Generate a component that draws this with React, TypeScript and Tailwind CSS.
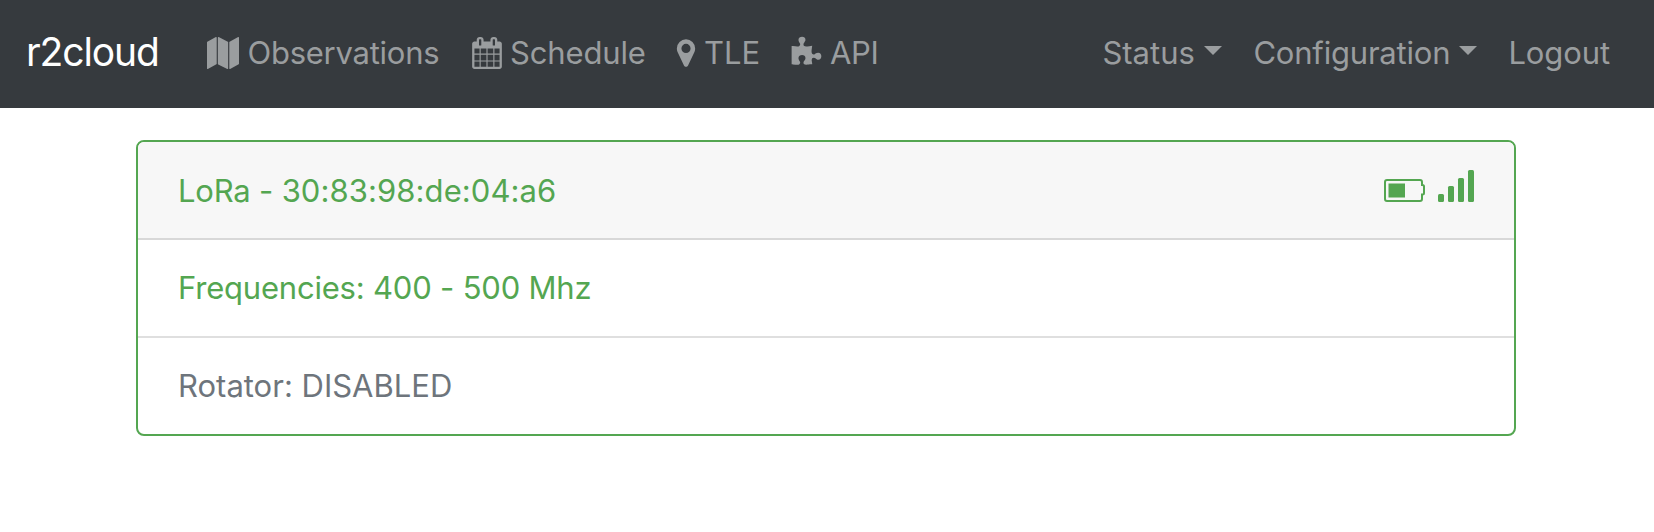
import React from "react";

type IconProps = { d: string; className?: string };

function Glyph({ d, className = "" }: IconProps) {
  return (
    <svg viewBox="0 0 1792 1792" fill="currentColor" className={`h-8 w-8 shrink-0 overflow-visible ${className}`} aria-hidden="true">
      <path d={d} />
    </svg>
  );
}

const MAP =
  "M512 0q13 0 22.5 9.5t9.5 22.5v1472q0 20-17 28l-480 256q-7 4-15 4-13 0-22.5-9.5t-9.5-22.5v-1472q0-20 17-28l480-256q7-4 15-4zm1248 0q13 0 22.5 9.5t9.5 22.5v1472q0 20-17 28l-480 256q-7 4-15 4-13 0-22.5-9.5t-9.5-22.5v-1472q0-20 17-28l480-256q7-4 15-4zm-1120 0q8 0 14 3l512 256q18 10 18 29v1472q0 13-9.5 22.5t-22.5 9.5q-8 0-14-3l-512-256q-18-10-18-29v-1472q0-13 9.5-22.5t22.5-9.5z";
const CALENDAR =
  "M192 1664h288v-288h-288v288zm352 0h320v-288h-320v288zm-352-352h288v-320h-288v320zm352 0h320v-320h-320v320zm-352-384h288v-288h-288v288zm736 736h320v-288h-320v288zm-384-736h320v-288h-320v288zm768 736h288v-288h-288v288zm-384-352h320v-320h-320v320zm-352-864v-288q0-13-9.5-22.5t-22.5-9.5h-64q-13 0-22.5 9.5t-9.5 22.5v288q0 13 9.5 22.5t22.5 9.5h64q13 0 22.5-9.5t9.5-22.5zm736 864h288v-320h-288v320zm-384-384h320v-288h-320v288zm384 0h288v-288h-288v288zm32-480v-288q0-13-9.5-22.5t-22.5-9.5h-64q-13 0-22.5 9.5t-9.5 22.5v288q0 13 9.5 22.5t22.5 9.5h64q13 0 22.5-9.5t9.5-22.5zm384-64v1280q0 52-38 90t-90 38h-1408q-52 0-90-38t-38-90v-1280q0-52 38-90t90-38h128v-96q0-66 47-113t113-47h64q66 0 113 47t47 113v96h384v-96q0-66 47-113t113-47h64q66 0 113 47t47 113v96h128q52 0 90 38t38 90z";
const MARKER =
  "M1152 640q0-106-75-181t-181-75-181 75-75 181 75 181 181 75 181-75 75-181zm256 0q0 109-33 179l-364 774q-16 33-47.5 52t-67.5 19-67.5-19-46.5-52l-365-774q-33-70-33-179 0-212 150-362t362-150 362 150 150 362z";
const PUZZLE =
  "M1755 1083q0 81-44.5 135t-123.5 54q-41 0-77.5-17.5t-59-38-56.5-38-71-17.5q-110 0-110 124 0 39 16 115t15 115v5q-22 0-33 1-34 3-97.5 11.5t-115.5 13.5-98 5q-61 0-103-26.5t-42-83.5q0-37 17.5-71t38-56.5 38-59 17.5-77.5q0-79-54-123.5t-135-44.5q-84 0-143 45.5t-59 127.5q0 43 15 83t33.5 64.5 33.5 53 15 50.5q0 45-46 89-37 35-117 35-95 0-245-24-9-2-27.5-4t-27.5-4l-13-2q-1 0-3-1-2 0-2-1v-1024q2 1 17.5 3.5t34 5 21.5 3.5q150 24 245 24 80 0 117-35 46-44 46-89 0-22-15-50.5t-33.5-53-33.5-64.5-15-83q0-82 59-127.5t144-45.5q80 0 134 44.5t54 123.5q0 41-17.5 77.5t-38 59-38 56.5-17.5 71q0 57 42 83.5t103 26.5q64 0 180-15t163-17v2q-1 2-3.5 17.5t-5 34-3.5 21.5q-24 150-24 245 0 80 35 117 44 46 89 46 22 0 50.5-15t53-33.5 64.5-33.5 83-15q82 0 127.5 59t45.5 143z";

function Caret() {
  return (
    <svg viewBox="0 0 18 9" fill="currentColor" className="mb-[5px] ml-[9px] h-[9px] w-[18px] shrink-0" aria-hidden="true">
      <path d="M0 0h18L9 9z" />
    </svg>
  );
}

function Battery() {
  return (
    <svg viewBox="0 0 42 24" className="h-6 w-[42px]" aria-hidden="true">
      <path d="M3 2H36a2 2 0 0 1 2 2V7h.5a1.500 1.500 0 0 1 1.500 1.500V15a1.500 1.500 0 0 1-1.500 1.500H38V21a2 2 0 0 1-2 2H3a2 2 0 0 1-2-2V4a2 2 0 0 1 2-2z" fill="none" stroke="currentColor" strokeWidth="2" />
      <path d="M4.500 5.500h16.500v14h-16.500z" fill="currentColor" />
    </svg>
  );
}

function Signal() {
  return (
    <svg viewBox="0 0 36 32" fill="currentColor" className="h-8 w-9" aria-hidden="true">
      <rect x="0" y="24" width="6" height="8" rx="1.500" />
      <rect x="10" y="16" width="6" height="16" rx="1.500" />
      <rect x="20" y="8" width="6" height="24" rx="1.500" />
      <rect x="30" y="0" width="6" height="32" rx="1.500" />
    </svg>
  );
}

export default function App() {
  return (
    <div className="min-h-[532px] bg-white font-['Inter',sans-serif] text-[31px] leading-[48px] whitespace-nowrap">
      <nav className="flex h-[108px] items-center bg-[#363a3e] pb-[2px] text-[#9a9d9f]">
        <a className="mb-[2px] ml-[26px] w-[181px] text-[39px] tracking-[-1.1px] text-white">r2cloud</a>
        <a className="flex w-[264px] items-center">
          <Glyph d={MAP} className="mr-[8.5px]" />
          <span className="tracking-[-0.25px]">Observations</span>
        </a>
        <a className="flex w-[206px] items-center">
          <Glyph d={CALENDAR} className="mr-[7px]" />
          <span className="tracking-[-0.15px]">Schedule</span>
        </a>
        <a className="flex w-[113px] items-center">
          <Glyph d={MARKER} className="mr-[2px] -ml-[7px]" />
          <span>TLE</span>
        </a>
        <a className="flex items-center">
          <Glyph d={PUZZLE} className="mr-[8px]" />
          <span className="tracking-[-0.3px]">API</span>
        </a>
        <div className="mr-[44px] ml-auto flex">
          <a className="flex w-[151px] items-center">
            <span>Status</span>
            <Caret />
          </a>
          <a className="flex w-[255px] items-center">
            <span className="tracking-[-0.2px]">Configuration</span>
            <Caret />
          </a>
          <a className="tracking-[-0.1px]">Logout</a>
        </div>
      </nav>
      <main className="mt-8 ml-[136px] w-[1380px] overflow-hidden rounded-lg border-2 border-[#54a651] text-[#54a651]">
        <header className="flex h-[98px] items-center justify-between border-b-2 border-[#d8d8d8] bg-[#f7f7f7] px-10">
          <span className="mt-px">
            <span className="tracking-[-0.2px]">LoRa - </span>
            <span className="tracking-[0.08px]">30:83:98:de:04:a6</span>
          </span>
          <span className="mb-[8px] flex items-end gap-3">
            <Battery />
            <Signal />
          </span>
        </header>
        <div className="flex h-[98px] items-center border-b-2 border-[#dfdfdf] px-10">
          <span className="tracking-[-0.2px]">Frequencies: 400 - 500 Mhz</span>
        </div>
        <div className="flex h-24 items-center px-10 text-[#6e757c]">
          <span>Rotator: DISABLED</span>
        </div>
      </main>
    </div>
  );
}
